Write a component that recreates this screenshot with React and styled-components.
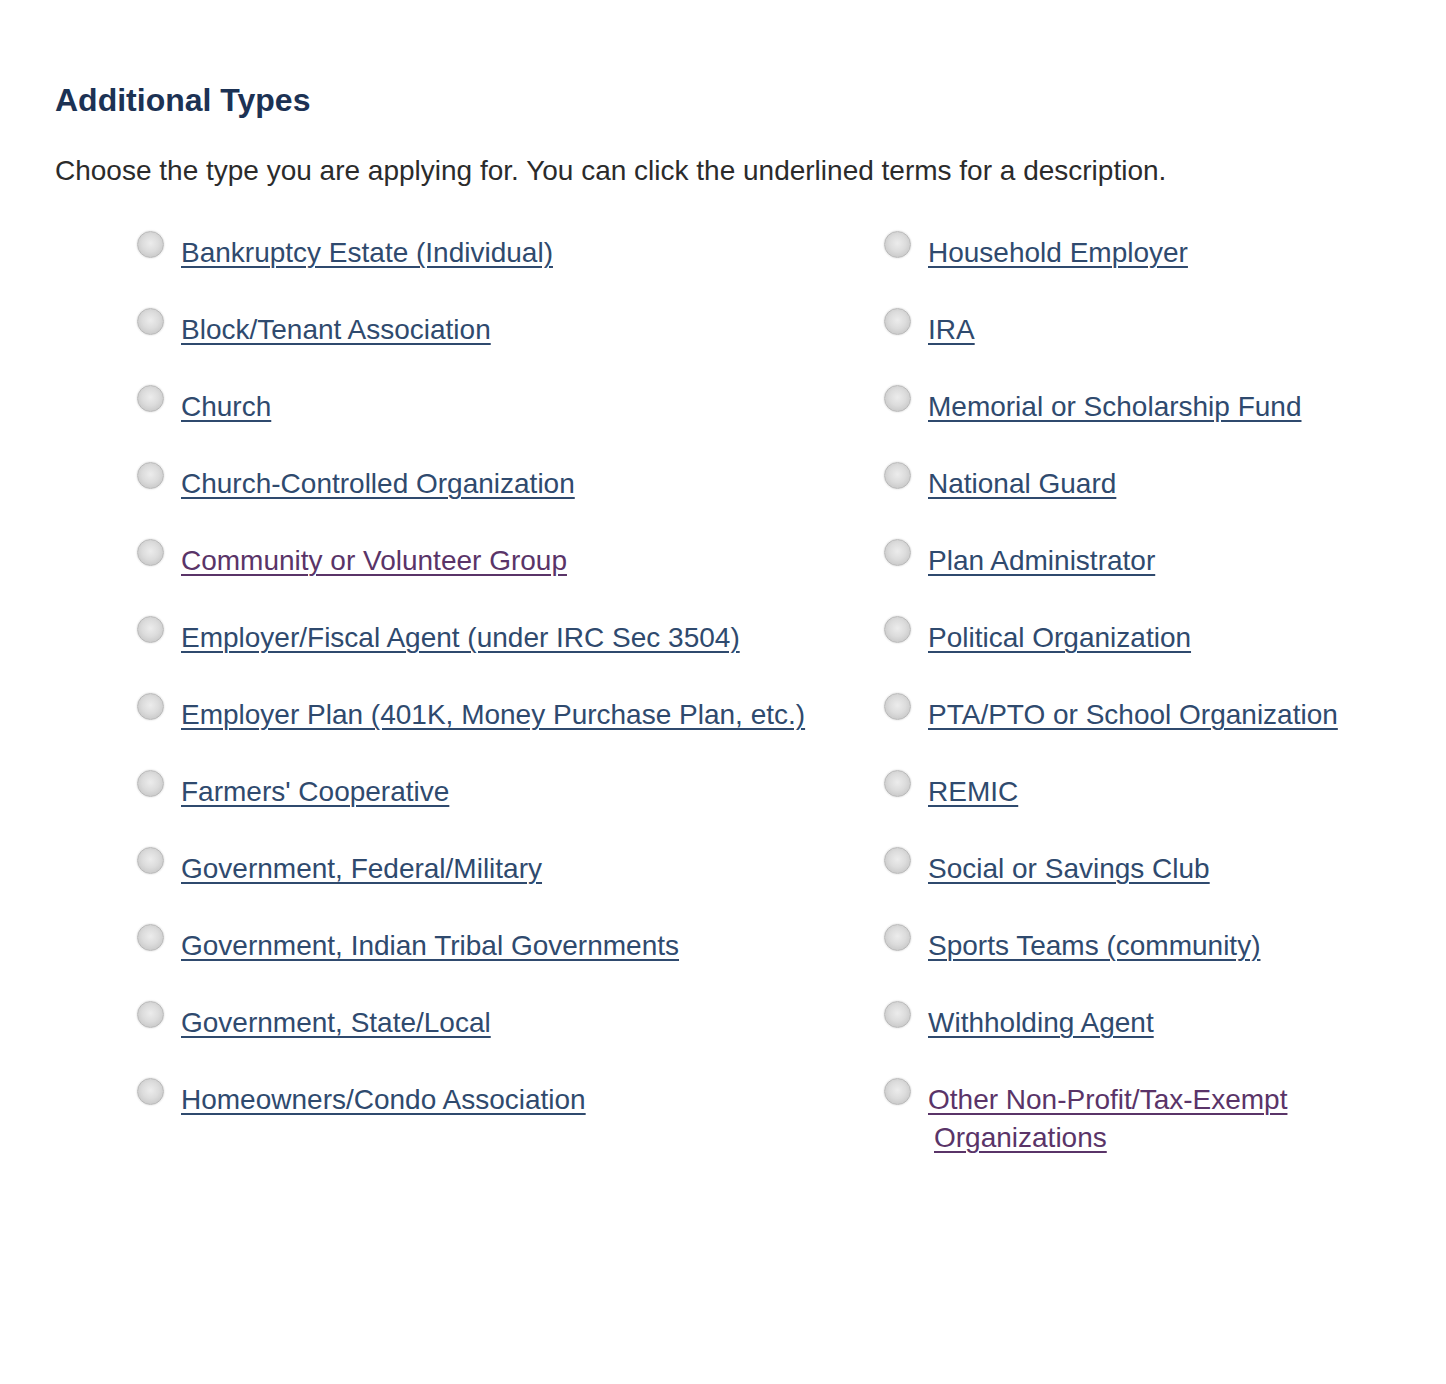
import React from "react";
import styled, { createGlobalStyle } from "styled-components";

const Global = createGlobalStyle`
  html, body { margin: 0; padding: 0; background: #ffffff; }
  body { font-family: "Liberation Sans", Arial, sans-serif; }
`;

const Page = styled.main`
  padding: 84px 0 200px 55px;
  min-height: 1384px;
  box-sizing: border-box;
  background: #fff;
`;

const Title = styled.h2`
  margin: 0;
  font-family: "Liberation Sans", Arial, sans-serif;
  font-weight: 700;
  font-size: 32px;
  line-height: 32px;
  color: #1c3254;
`;

const Intro = styled.p`
  margin: 41px 0 0;
  font-size: 28px;
  line-height: 28px;
  color: #2b2b2b;
`;

const Columns = styled.div`
  margin-top: 46px;
  padding-left: 82px;
  display: grid;
  grid-template-columns: 747px 1fr;
`;

const List = styled.ul`
  list-style: none;
  margin: 0;
  padding: 0;
  display: flex;
  flex-direction: column;
  gap: 36px;
`;

const Row = styled.li`
  display: flex;
  align-items: flex-start;
  gap: 17px;
`;

const Radio = styled.input.attrs({ type: "radio", name: "addtype" })`
  appearance: none;
  -webkit-appearance: none;
  margin: 0;
  flex: 0 0 auto;
  width: 27px;
  height: 27px;
  border-radius: 50%;
  border: 1px solid #b9b9b9;
  box-sizing: border-box;
  background: radial-gradient(circle at 50% 45%, #ececec 0%, #dcdcdc 45%, #c8c8c8 80%, #b8b8b8 100%);
  box-shadow: 0 0 2px rgba(0, 0, 0, 0.18);
`;

const Label = styled.a`
  margin-top: 3px;
  font-size: 28px;
  line-height: 38px;
  color: ${(p) => (p.$visited ? "#5a3468" : "#2f4a6e")};
  text-decoration: underline;
  text-decoration-thickness: 2px;
  text-underline-offset: 4px;
  cursor: pointer;
`;

const Continuation = styled.span`
  display: inline-block;
  margin-left: 6px;
  text-decoration: underline;
  text-decoration-thickness: 2px;
  text-underline-offset: 4px;
`;

const left = [
  "Bankruptcy Estate (Individual)",
  "Block/Tenant Association",
  "Church",
  "Church-Controlled Organization",
  { t: "Community or Volunteer Group", v: true },
  "Employer/Fiscal Agent (under IRC Sec 3504)",
  "Employer Plan (401K, Money Purchase Plan, etc.)",
  "Farmers' Cooperative",
  "Government, Federal/Military",
  "Government, Indian Tribal Governments",
  "Government, State/Local",
  "Homeowners/Condo Association",
];

const right = [
  "Household Employer",
  "IRA",
  "Memorial or Scholarship Fund",
  "National Guard",
  "Plan Administrator",
  "Political Organization",
  "PTA/PTO or School Organization",
  "REMIC",
  "Social or Savings Club",
  "Sports Teams (community)",
  "Withholding Agent",
  { t: "Other Non-Profit/Tax-Exempt", t2: "Organizations", v: true },
];

function Item({ item }) {
  const data = typeof item === "string" ? { t: item } : item;
  return (
    <Row>
      <Radio aria-label={data.t} />
      <Label $visited={data.v}>
        {data.t}
        {data.t2 && (
          <>
            <br />
            <Continuation>{data.t2}</Continuation>
          </>
        )}
      </Label>
    </Row>
  );
}

export default function App() {
  return (
    <>
      <Global />
      <Page>
        <Title>Additional Types</Title>
        <Intro>
          Choose the type you are applying for. You can click the underlined terms for a description.
        </Intro>
        <Columns>
          <List>
            {left.map((it, i) => (
              <Item key={i} item={it} />
            ))}
          </List>
          <List>
            {right.map((it, i) => (
              <Item key={i} item={it} />
            ))}
          </List>
        </Columns>
      </Page>
    </>
  );
}
